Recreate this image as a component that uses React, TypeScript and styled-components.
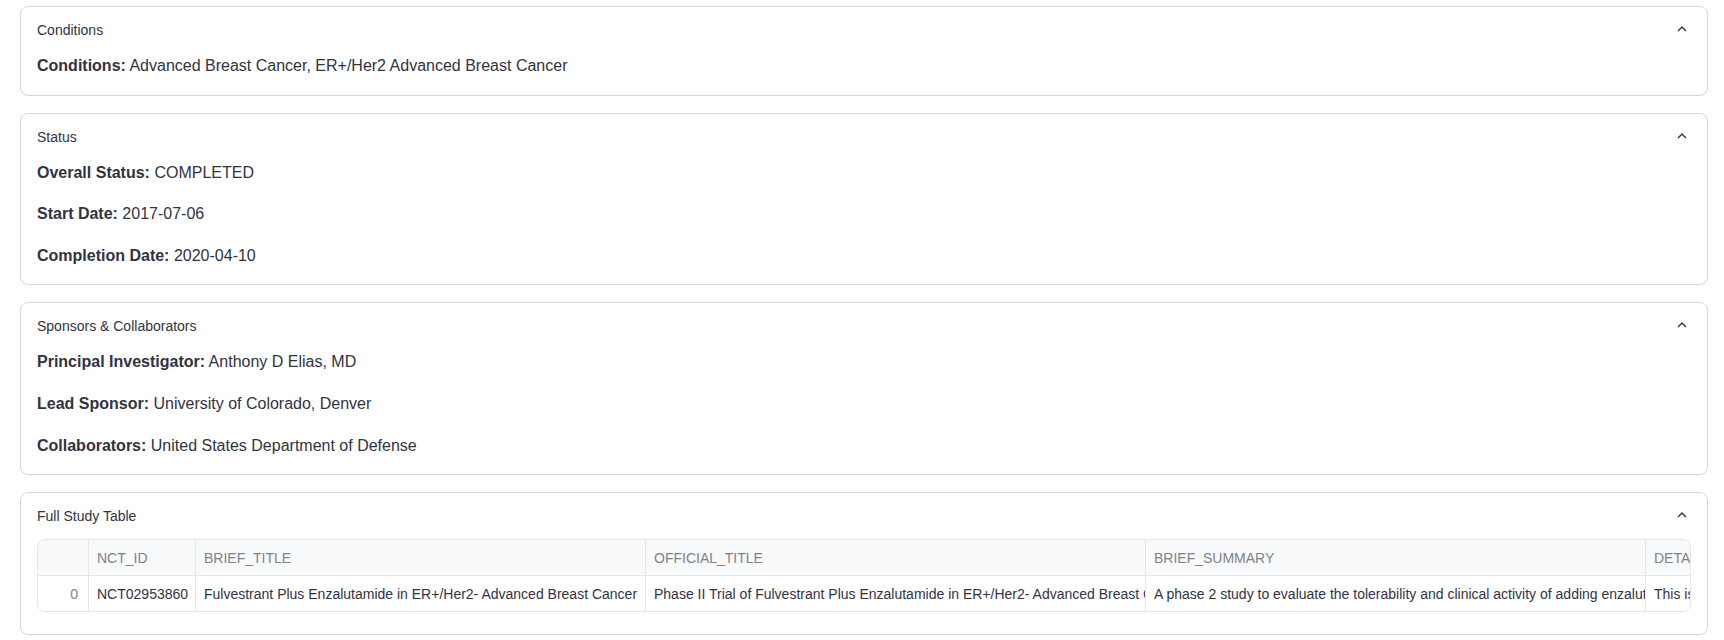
import styled, { createGlobalStyle } from "styled-components";

const GlobalStyle = createGlobalStyle`
  body {
    margin: 0;
    background: #ffffff;
    font-family: "Liberation Sans", Arial, sans-serif;
    color: #31333f;
  }
`;

const Page = styled.main`
  display: flex;
  flex-direction: column;
  gap: 17px;
  padding: 6px 16px 6px 20px;
`;

const Expander = styled.section`
  border: 1px solid #d6d6d9;
  border-radius: 8px;
  background: #ffffff;
  overflow: hidden;
`;

const Summary = styled.div`
  height: 46px;
  display: flex;
  align-items: center;
  justify-content: space-between;
  padding: 0 16px;
  font-size: 14px;
  line-height: 20px;
  color: #31333f;
`;

const Chevron = styled.svg`
  width: 18px;
  height: 18px;
  fill: #31333f;
  margin-top: -2px;
`;

const Body = styled.div<{ $bottom?: number }>`
  display: flex;
  flex-direction: column;
  gap: 16px;
  padding: 0 16px ${(p) => p.$bottom ?? 16}px;
`;

const Line = styled.p`
  margin: 0;
  font-size: 16px;
  line-height: 25.6px;
`;

const Label = styled.strong`
  font-weight: 700;
`;

const Grid = styled.div`
  border: 1px solid #e6e6ea;
  border-radius: 8px;
  overflow: hidden;
  font-size: 14px;
`;

const Row = styled.div<{ $head?: boolean }>`
  display: flex;
  width: max-content;
  height: ${(p) => (p.$head ? 36 : 35)}px;
  background: ${(p) => (p.$head ? "#f8f9fb" : "#ffffff")};
  border-bottom: ${(p) => (p.$head ? "1px solid #e6e6ea" : "none")};
  box-sizing: border-box;
`;

const Cell = styled.div<{ $w: number; $head?: boolean; $index?: boolean }>`
  flex: none;
  width: ${(p) => p.$w}px;
  box-sizing: border-box;
  display: flex;
  align-items: center;
  justify-content: ${(p) => (p.$index ? "flex-end" : "flex-start")};
  padding: ${(p) => (p.$index ? "0 10px 0 8px" : "0 3px 0 8px")};
  border-right: 1px solid #e6e6ea;
  white-space: nowrap;
  overflow: hidden;
  color: ${(p) => (p.$head || p.$index ? "#808289" : "#31333f")};
`;

const ExpandLess = () => (
  <Chevron viewBox="0 0 24 24">
    <path d="M12 8l-6 6 1.41 1.41L12 10.83l4.59 4.58L18 14z" />
  </Chevron>
);

type Field = { label: string; value: string };

const sections: { title: string; fields: Field[] }[] = [
  {
    title: "Conditions",
    fields: [
      {
        label: "Conditions:",
        value: "Advanced Breast Cancer, ER+/Her2 Advanced Breast Cancer",
      },
    ],
  },
  {
    title: "Status",
    fields: [
      { label: "Overall Status:", value: "COMPLETED" },
      { label: "Start Date:", value: "2017-07-06" },
      { label: "Completion Date:", value: "2020-04-10" },
    ],
  },
  {
    title: "Sponsors & Collaborators",
    fields: [
      { label: "Principal Investigator:", value: "Anthony D Elias, MD" },
      { label: "Lead Sponsor:", value: "University of Colorado, Denver" },
      { label: "Collaborators:", value: "United States Department of Defense" },
    ],
  },
];

const columns = [
  { name: "", width: 51 },
  { name: "NCT_ID", width: 107 },
  { name: "BRIEF_TITLE", width: 450 },
  { name: "OFFICIAL_TITLE", width: 500 },
  { name: "BRIEF_SUMMARY", width: 500 },
  { name: "DETAILED_DESCRIPTION", width: 500 },
];

const row = [
  "0",
  "NCT02953860",
  "Fulvestrant Plus Enzalutamide in ER+/Her2- Advanced Breast Cancer",
  "Phase II Trial of Fulvestrant Plus Enzalutamide in ER+/Her2- Advanced Breast Cancer",
  "A phase 2 study to evaluate the tolerability and clinical activity of adding enzalutamide to fulvestrant",
  "This is a single arm, open label phase II study",
];

export default function App() {
  return (
    <>
      <GlobalStyle />
      <Page>
        {sections.map((s) => (
          <Expander key={s.title}>
            <Summary>
              <span>{s.title}</span>
              <ExpandLess />
            </Summary>
            <Body>
              {s.fields.map((f) => (
                <Line key={f.label}>
                  <Label>{f.label}</Label> {f.value}
                </Line>
              ))}
            </Body>
          </Expander>
        ))}
        <Expander>
          <Summary>
            <span>Full Study Table</span>
            <ExpandLess />
          </Summary>
          <Body $bottom={22}>
            <Grid>
              <Row $head>
                {columns.map((c, i) => (
                  <Cell key={i} $w={c.width} $head>
                    {c.name}
                  </Cell>
                ))}
              </Row>
              <Row>
                {row.map((v, i) => (
                  <Cell key={i} $w={columns[i].width} $index={i === 0}>
                    {v}
                  </Cell>
                ))}
              </Row>
            </Grid>
          </Body>
        </Expander>
      </Page>
    </>
  );
}
